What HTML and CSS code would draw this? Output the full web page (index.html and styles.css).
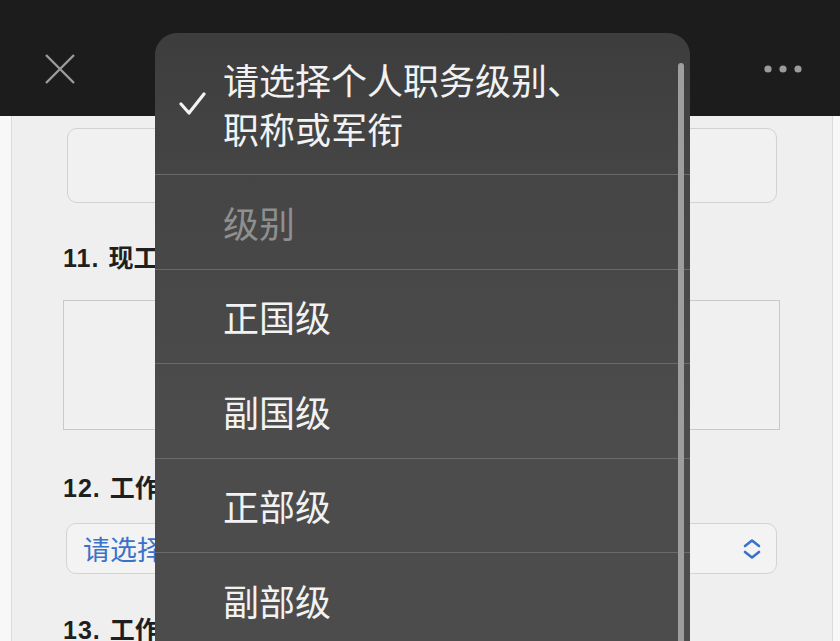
FILE: index.html
```html
<!DOCTYPE html>
<html lang="zh-CN">
<head>
    <meta charset="UTF-8">
    <meta name="viewport" content="width=device-width, initial-scale=1.0">
    <title>问卷</title>
    <link rel="stylesheet" href="styles.css">
</head>
<body>
    <div class="screen">
        <header class="topbar">
            <svg class="close-icon" width="32" height="32" viewBox="0 0 32 32">
                <path d="M2 2 L30 30 M30 2 L2 30" stroke="#9b9b9b" stroke-width="2.4" fill="none"/>
            </svg>
            <svg class="more-icon" width="40" height="10" viewBox="0 0 40 10">
                <circle cx="6" cy="5" r="3.6" fill="#9b9b9b"/>
                <circle cx="21" cy="5" r="3.6" fill="#9b9b9b"/>
                <circle cx="36" cy="5" r="3.6" fill="#9b9b9b"/>
            </svg>
        </header>

        <main class="page">
            <div class="card">
                <div class="text-input"></div>

                <div class="question"><span class="num">11.</span>现工作单位及部门</div>
                <div class="textarea"></div>

                <div class="question"><span class="num">12.</span>工作职务级别</div>
                <div class="select">
                    <span class="select-text">请选择个人职务级别、职称或军衔</span>
                    <svg class="select-arrows" width="20" height="22" viewBox="0 0 20 22">
                        <path d="M3 8 L10 2.5 L17 8 M3 14 L10 19.5 L17 14" stroke="#3a72c9" stroke-width="2.6" fill="none" stroke-linecap="round" stroke-linejoin="round"/>
                    </svg>
                </div>

                <div class="question"><span class="num">13.</span>工作单位所在地</div>
            </div>
        </main>

        <div class="picker">
            <div class="picker-item picker-selected">
                <svg class="check" width="28" height="24" viewBox="0 0 28 24">
                    <path d="M2 12 L10 21 L25 2" stroke="#f2f2f2" stroke-width="3.2" fill="none" stroke-linecap="round" stroke-linejoin="round"/>
                </svg>
                <span class="picker-label">请选择个人职务级别、<br>职称或军衔</span>
            </div>
            <div class="picker-item picker-group">级别</div>
            <div class="picker-item">正国级</div>
            <div class="picker-item">副国级</div>
            <div class="picker-item">正部级</div>
            <div class="picker-item">副部级</div>
            <div class="picker-scrollbar"></div>
        </div>
    </div>
</body>
</html>
```

FILE: styles.css
```css
* {
    box-sizing: border-box;
}

body {
    margin: 0;
    font-family: "Noto Sans CJK SC", "Noto Sans", sans-serif;
    background: #f8f8f8;
    overflow: hidden;
}

.screen {
    position: relative;
    width: 840px;
    height: 641px;
    overflow: hidden;
}

.topbar {
    height: 116px;
    background: #1c1c1c;
    display: flex;
    justify-content: space-between;
    align-items: flex-start;
    padding: 53px 38px 0 44px;
}

.more-icon {
    margin-top: 11px;
}

.page {
    padding: 0 7px 0 11px;
}

.card {
    background: #efefef;
    border-left: 1px solid #dcdcdc;
    border-right: 1px solid #dcdcdc;
    padding: 12px 52px 0 51px;
    height: 525px;
}

.text-input {
    height: 75px;
    margin: 0 3px 0 4px;
    background: #f1f1f1;
    border: 1.5px solid #d2d2d2;
    border-radius: 10px;
}

.question {
    font-family: "Liberation Sans", "Noto Sans CJK SC", sans-serif;
    font-weight: bold;
    font-size: 25px;
    line-height: 36px;
    color: #1f1f1f;
    margin-top: 37px;
    margin-bottom: 24px;
    white-space: nowrap;
}

.num {
    letter-spacing: 1px;
    margin-right: 9px;
}

.textarea {
    height: 130px;
    background: #f0f0f0;
    border: 1.5px solid #c9c9c9;
}

.textarea + .question {
    margin-top: 40px;
    margin-bottom: 17px;
}

.select {
    height: 51px;
    margin: 0 3px;
    background: #f3f3f3;
    border: 1.5px solid #d3d3d3;
    border-radius: 10px;
    display: flex;
    align-items: center;
    justify-content: space-between;
    padding: 0 14px 0 16px;
}

.select-text {
    font-size: 27px;
    color: #3a72c9;
    white-space: nowrap;
    overflow: hidden;
}

.select + .question {
    margin-top: 38px;
}

/* native picker popover */
.picker {
    position: absolute;
    left: 155px;
    top: 33px;
    width: 535px;
    height: 660px;
    border-radius: 22px;
    background: linear-gradient(#3d3d3d 0, #454545 140px, #4c4c4c 400px);
    overflow: hidden;
    color: #f2f2f2;
}

.picker-item {
    height: 94.5px;
    display: flex;
    align-items: center;
    padding-left: 68px;
    font-size: 36px;
    border-top: 1px solid #6a6a6a;
}

.picker-selected {
    height: 141px;
    border-top: none;
    position: relative;
    padding-top: 1px;
}

.picker-label {
    line-height: 49px;
}

.check {
    position: absolute;
    left: 24px;
    top: 59px;
}

.picker-group {
    color: #8f8f8f;
}

.picker-scrollbar {
    position: absolute;
    right: 6px;
    top: 30px;
    width: 6px;
    height: 700px;
    border-radius: 3px;
    background: #9e9e9e;
}
```
